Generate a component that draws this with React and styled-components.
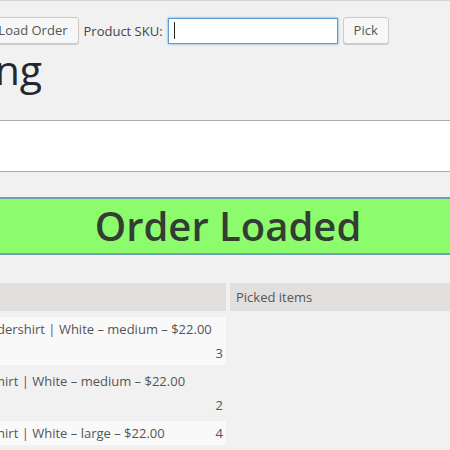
import React from 'react';
import styled, { createGlobalStyle } from 'styled-components';

const GlobalStyle = createGlobalStyle`
  html, body {
    margin: 0;
    padding: 0;
    background: #f1f1f1;
    overflow: hidden;
  }
  body {
    font-family: "Open Sans", "Liberation Sans", sans-serif;
    font-size: 13px;
    color: #444;
  }
`

// the screenshot is a crop of a wider admin page, so the page runs off both sides
const Page = styled.div`
  box-sizing: border-box;
  width: 918px;
  margin-left: -231px;
  padding: 16px 20px 0;
  border-top: 1px solid #d6d6d6;
`

const Toolbar = styled.div`
  display: flex;
  align-items: center;
  gap: 5px;
`

const Label = styled.label`
  color: #444;
  font-size: 13px;
`

const Button = styled.button`
  height: 27px;
  padding: 0 10px;
  font-family: inherit;
  font-size: 13px;
  line-height: 25px;
  color: #555;
  background: #f7f7f7;
  border: 1px solid #cccccc;
  border-radius: 3px;
  box-shadow: 0 1px 0 #cccccc;
`

const Field = styled.span`
  position: relative;
  display: inline-block;

  &::after {
    content: ${({caret}) => caret ? '""' : 'none'};
    position: absolute;
    left: 6px;
    top: 5px;
    width: 1px;
    height: 17px;
    background: #222;
  }
`

const Input = styled.input`
  box-sizing: border-box;
  width: ${({width}) => width || 170}px;
  height: 26px;
  margin-top: 1px;
  padding: 0 6px;
  font-family: inherit;
  font-size: 13px;
  background: #fff;
  border: 1px solid ${({focused}) => focused ? '#5b9dd9' : '#ddd'};
  box-shadow: ${({focused}) => focused ? '0 0 2px rgba(30, 140, 190, 0.8)' : 'inset 0 1px 2px rgba(0,0,0,.07)'};
  outline: none;
  display: block;
`

const Title = styled.h1`
  margin: 0 0 0 -5px;
  font-size: 41px;
  font-weight: 400;
  line-height: 50px;
  color: #23282d;
`

const NotesBox = styled.div`
  height: 50px;
  margin-top: 26px;
  background: #fff;
  border: 1px solid #aaa;
`

const Notice = styled.div`
  margin-top: 25px;
  height: 54px;
  background: #8cfc6c;
  border: 2px solid #6e9fb5;
  color: #343d33;
  font-size: 40px;
  font-weight: 600;
  line-height: 54px;
  text-align: center;
`

const Columns = styled.div`
  display: grid;
  grid-template-columns: 1fr 1fr;
  column-gap: 4px;
  margin: 28px 68px 0;
  align-items: start;
`

const Column = styled.div`
  display: flex;
  flex-direction: column;
  gap: 4px;
`

const HeadCell = styled.div`
  height: 28px;
  margin-bottom: 2px;
  padding: 0 6px;
  line-height: 28px;
  background: #e2e0df;
  color: #555;
`

const ItemRow = styled.div`
  display: flex;
  justify-content: space-between;
  align-items: flex-end;
  padding: 0 3px 0 19px;
  line-height: 24px;
  color: #555;
  background: ${({striped}) => striped ? '#f9f9f9' : 'transparent'};
`

const Meta = styled.div`
  color: #888;
`

const items = [
  { name: 'Premium Cotton Undershirt | White – medium – $22.00', sku: 'SKU: PCU-W-M', qty: 3 },
  { name: 'Premium Cotton T-shirt | White – medium – $22.00', sku: 'SKU: PCT-W-M', qty: 2 },
  { name: 'Premium Cotton T-shirt | White – large – $22.00', qty: 4 },
]

export default function App() {
  return (
    <>
      <GlobalStyle />
      <Page>
        <Toolbar>
          <Label>Order number:</Label>
          <Field><Input width={97} defaultValue="1042" /></Field>
          <Button>Load Order</Button>
          <Label>Product SKU:</Label>
          <Field caret><Input focused /></Field>
          <Button>Pick</Button>
        </Toolbar>
        <Title>Order Picking</Title>
        <NotesBox />
        <Notice>Order Loaded</Notice>
        <Columns>
          <Column>
            <HeadCell>Order items</HeadCell>
            {items.map((item, i) => (
              <ItemRow key={i} striped={i % 2 === 0}>
                <div>
                  <div>{item.name}</div>
                  {item.sku && <Meta>{item.sku}</Meta>}
                </div>
                <span>{item.qty}</span>
              </ItemRow>
            ))}
          </Column>
          <Column>
            <HeadCell>Picked items</HeadCell>
          </Column>
        </Columns>
      </Page>
    </>
  )
}
